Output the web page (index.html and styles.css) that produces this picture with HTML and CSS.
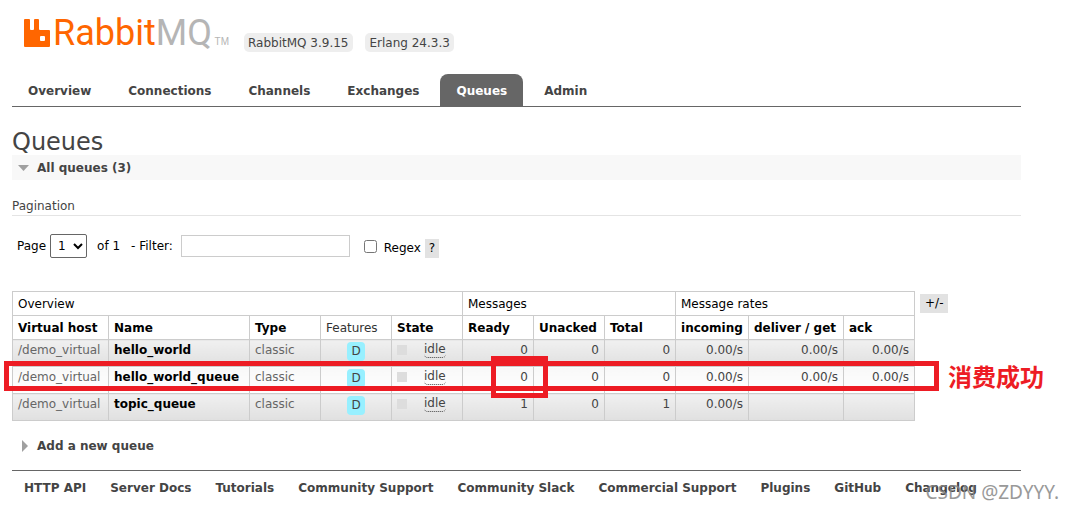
FILE: index.html
```
<!DOCTYPE html>
<html lang="en">
<head>
<meta charset="utf-8">
<title>RabbitMQ Management</title>
<link rel="stylesheet" href="styles.css">
</head>
<body>
<header class="masthead">
  <a class="logo" href="#" aria-label="RabbitMQ">
    <svg class="logo-mark" width="27" height="28" viewBox="0 0 27 28" aria-hidden="true"><path fill="#ff6600" fill-rule="evenodd" d="M1 0H5Q6 0 6 1V10Q6 11 7 11H9Q10 11 10 10V1Q10 0 11 0H14Q15 0 15 1V10Q15 11 16 11H25Q26 11 26 12V27Q26 28 25 28H1Q0 28 0 27V1Q0 0 1 0ZM17 17Q16 17 16 18V21Q16 22 17 22H20Q21 22 21 21V18Q21 17 20 17Z"/></svg>
    <span class="logo-text">Rabbit<span class="logo-grey">MQ</span></span><span class="logo-tm">TM</span>
  </a>
  <span class="version">RabbitMQ 3.9.15</span>
  <span class="version">Erlang 24.3.3</span>
</header>
<nav class="tabs">
  <a href="#">Overview</a>
  <a href="#">Connections</a>
  <a href="#">Channels</a>
  <a href="#">Exchanges</a>
  <a class="selected" href="#">Queues</a>
  <a href="#">Admin</a>
</nav>
<main>
  <h1>Queues</h1>
  <h2 class="section-head open"><svg width="11" height="6" viewBox="0 0 11 6" aria-hidden="true"><path fill="#a0a0a0" d="M0 0H11L5.500 6Z"/></svg>All queues (3)</h2>
  <h3>Pagination</h3>
  <form class="filter">
    <label for="page">Page</label>
    <select id="page"><option>1</option></select>
    <span class="of">of 1</span>
    <label class="filter-label" for="filter">- Filter:</label>
    <input class="filter-input" id="filter" type="text">
    <input class="regex-box" id="regex" type="checkbox">
    <label class="regex-label" for="regex">Regex</label>
    <button class="small-button help" type="button">?</button>
  </form>
  <div class="queue-list">
    <table>
      <colgroup><col class="c-host"><col class="c-name"><col class="c-std" span="6"><col class="c-in"><col class="c-get"><col class="c-std"></colgroup>
      <thead>
        <tr><th class="plain" colspan="5">Overview</th><th class="plain" colspan="3">Messages</th><th class="plain" colspan="3">Message rates</th></tr>
        <tr><th>Virtual host</th><th>Name</th><th>Type</th><th class="plain grey">Features</th><th>State</th><th>Ready</th><th>Unacked</th><th>Total</th><th>incoming</th><th>deliver / get</th><th>ack</th></tr>
      </thead>
      <tbody>
        <tr class="alt"><td>/demo_virtual</td><td><a href="#">hello_world</a></td><td>classic</td><td class="c"><abbr class="feature">D</abbr></td><td><span class="state"><i></i><abbr>idle</abbr></span></td><td class="r">0</td><td class="r">0</td><td class="r">0</td><td class="r">0.00/s</td><td class="r">0.00/s</td><td class="r">0.00/s</td></tr>
        <tr class="light"><td>/demo_virtual</td><td><a href="#">hello_world_queue</a></td><td>classic</td><td class="c"><abbr class="feature">D</abbr></td><td><span class="state"><i></i><abbr>idle</abbr></span></td><td class="r">0</td><td class="r">0</td><td class="r">0</td><td class="r">0.00/s</td><td class="r">0.00/s</td><td class="r">0.00/s</td></tr>
        <tr class="alt"><td>/demo_virtual</td><td><a href="#">topic_queue</a></td><td>classic</td><td class="c"><abbr class="feature">D</abbr></td><td><span class="state"><i></i><abbr>idle</abbr></span></td><td class="r">1</td><td class="r">0</td><td class="r">1</td><td class="r">0.00/s</td><td></td><td></td></tr>
      </tbody>
    </table>
    <button class="small-button columns" type="button">+/-</button>
    <div class="mark mark-row"></div>
    <div class="mark mark-cell"></div>
    <div class="mark-note" lang="zh-CN">消费成功</div>
  </div>
  <h2 class="section-head"><svg width="11" height="12" viewBox="0 0 11 12" aria-hidden="true"><path fill="#a0a0a0" d="M4 0L10 6L4 12Z"/></svg>Add a new queue</h2>
</main>
<footer>
  <a href="#">HTTP API</a>
  <a href="#">Server Docs</a>
  <a href="#">Tutorials</a>
  <a href="#">Community Support</a>
  <a href="#">Community Slack</a>
  <a href="#">Commercial Support</a>
  <a href="#">Plugins</a>
  <a href="#">GitHub</a>
  <a href="#">Changelog</a>
  <span class="watermark">CSDN @ZDYYY.</span>
</footer>
</body>
</html>
```
FILE: styles.css
```
* { box-sizing: border-box; }
body {
  margin: 0;
  padding: 0 53px 0 12px;
  background: #fff;
  color: #444;
  font: 12px/18px "DejaVu Sans", Verdana, sans-serif;
}
a { color: inherit; text-decoration: none; }
h1, h2, h3 { margin: 0; }

.masthead { display: flex; align-items: flex-end; gap: 12px; height: 52px; }
.logo { display: flex; align-items: flex-end; height: 34px; margin: 0 3px 5px 12px; width: 205px; }
.logo-mark { flex: none; margin-right: 2px; }
.logo-text { height: 34px; color: #f60; font: 36px/40px Roboto, sans-serif; }
.logo-grey { color: #b5b5b5; }
.logo-tm { margin-left: auto; color: #b5b5b5; font: 10px/10px "Liberation Sans", sans-serif; }
.version { padding: 1px 4px 0; border-radius: 5px; background: #eee; }
.version:first-of-type { padding-right: 5px; }

.tabs { display: flex; gap: 5px; margin-top: 22px; border-bottom: 1px solid #666; }
.tabs a { padding: 8px 16px 6px; border-radius: 8px 8px 0 0; font-weight: bold; }
.tabs .selected { background: #666; color: #fff; }

h1 { margin-top: 22px; font-size: 24px; line-height: 26px; font-weight: normal; }
.section-head { display: flex; align-items: center; gap: 8px; padding: 4px 6px 3px; font-size: 12px; line-height: 18px; }
.open { background: #f8f8f8; }
h3 { margin-top: 17px; border-bottom: 1px solid #e4e4e4; font-size: 12px; font-weight: normal; }

.filter { display: flex; align-items: center; margin: 18px 0 33px 5px; color: #000; }
.filter select { width: 37px; height: 24px; margin-left: 4px; padding: 0 0 0 3px; border: 1px solid #666; border-radius: 2px; background: #fff; color: #000; font: 12px "DejaVu Sans", sans-serif; }
.of { margin-left: 10px; }
.filter-label { margin-left: 11px; }
.filter-input { width: 169px; height: 22px; margin-left: 8px; border: 1px solid #ccc; }
.regex-box { margin: 0 7px 0 14px; }
.small-button { height: 19px; margin: 0; padding: 0 4px; border: 0; background: #e2e2e2; color: #000; font: 12px/19px "DejaVu Sans", sans-serif; }
.regex-label { margin-right: 4px; padding-top: 4px; }
.help { margin-top: 4px; }

.queue-list { position: relative; display: flex; align-items: flex-start; gap: 5px; margin-bottom: 12px; }
table { width: 903px; table-layout: fixed; border-collapse: collapse; }
.c-host { width: 96px; }
.c-name { width: 141px; }
.c-std { width: 71px; }
.c-in { width: 73px; }
.c-get { width: 95px; }
th, td { padding: 0 5px; border: 1px solid #ccc; text-align: left; white-space: nowrap; vertical-align: top; }
th { height: 24px; padding-top: 1px; color: #000; line-height: 22px; }
td { height: 27px; line-height: 20px; }
td:first-child, td:nth-child(3) { color: #666; }
td a { color: #000; font-weight: bold; }
.plain { font-weight: normal; }
.grey { color: #333; }
.alt td { background: linear-gradient(#f0f0f0, #e0e0e0); }
.light td { background: linear-gradient(#f8f8f8, #fff); }
.r { padding-right: 5px; text-align: right; }
.c { text-align: center; }
.feature { display: inline-block; width: 18px; margin-top: 2px; border-radius: 4px; background: #98f0ff; line-height: 19px; }
.state { display: flex; align-items: center; gap: 17px; padding-top: 1px; }
.state i { width: 10px; height: 10px; background: #ddd; }
.state abbr { border-bottom: 1px dotted #444; border-radius: 4px; line-height: 16px; }
.columns { margin-top: 3px; padding: 0 5px; }

.mark { position: absolute; border: 5px solid #ed1c24; }
.mark-row { left: -8px; top: 70px; width: 935px; height: 30px; }
.mark-cell { left: 479px; top: 65px; width: 57px; height: 42px; }
.mark-note { position: absolute; left: 936px; top: 70px; color: #ed1c24; font: bold 24px/30px "Noto Sans CJK SC", sans-serif; white-space: nowrap; }

footer { position: relative; display: flex; gap: 24px; margin-top: 12px; padding: 8px 12px; border-top: 1px solid #666; font-weight: bold; white-space: nowrap; }
.watermark { position: absolute; right: -38px; top: 10px; color: #888; opacity: .85; font: 19px/22px "Noto Sans", sans-serif; }
```
